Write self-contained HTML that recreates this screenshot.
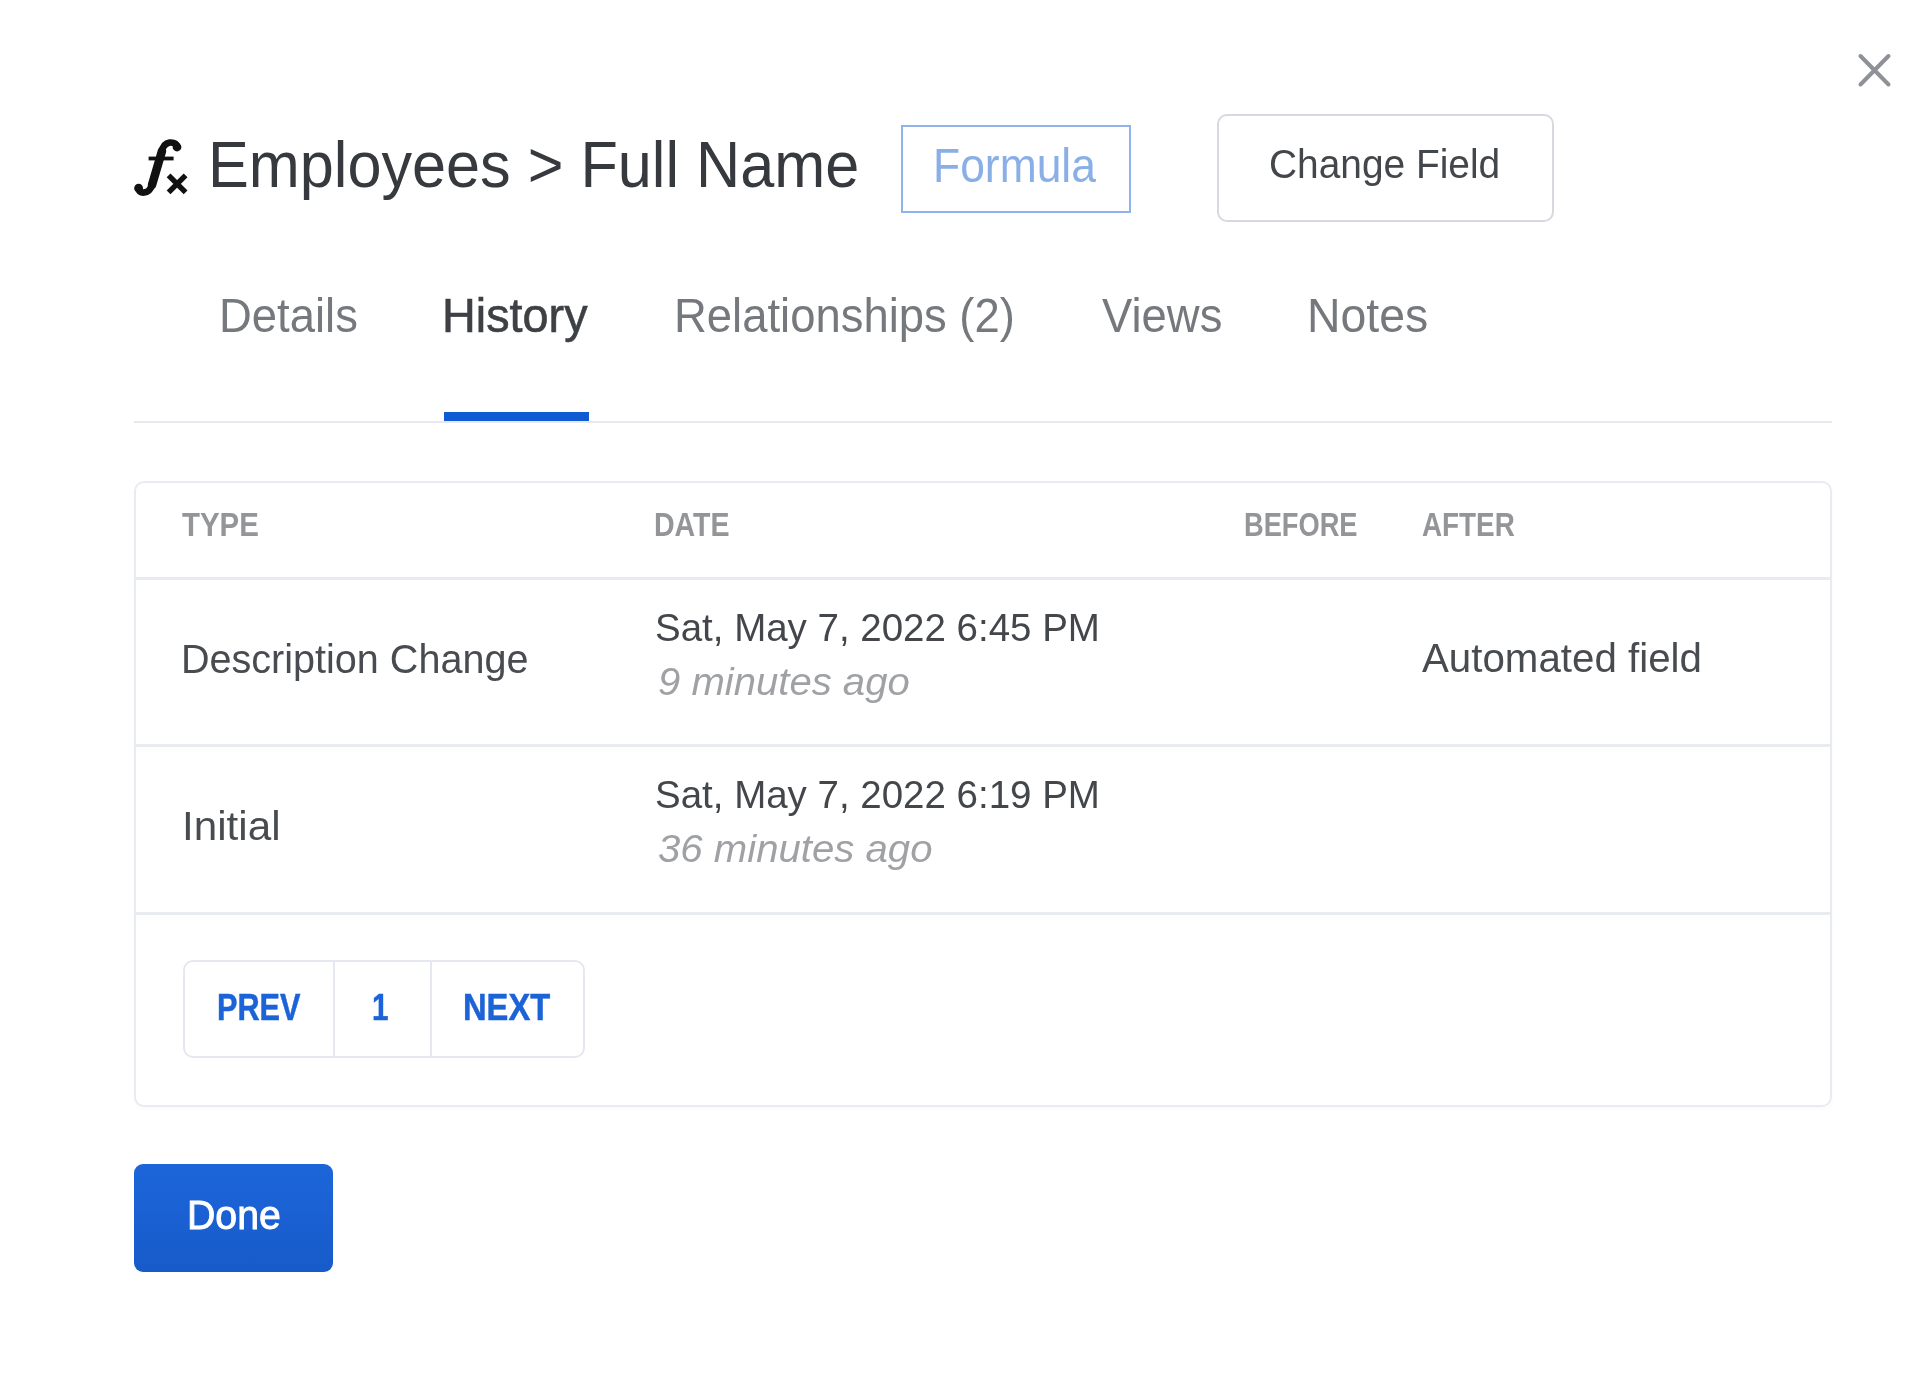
<!DOCTYPE html>
<html><head><meta charset="utf-8">
<style>
html,body{margin:0;padding:0;}
body{width:1920px;height:1377px;position:relative;overflow:hidden;background:#ffffff;font-family:"Liberation Sans",sans-serif;}
#wrap{position:absolute;left:0;top:0;width:1920px;height:1377px;filter:blur(0.7px);}
.t{position:absolute;white-space:nowrap;line-height:1;transform-origin:0 0;}
.b{position:absolute;box-sizing:border-box;}
</style></head><body><div id="wrap">
<!-- close -->
<svg class="b" style="left:1850px;top:46px" width="50" height="50" viewBox="1850 46 50 50"><path d="M1860.5 56 L1888.5 84.5 M1888.5 56 L1860.5 84.5" stroke="#8e9196" stroke-width="4" stroke-linecap="round" fill="none"/></svg>
<!-- fx icon -->
<svg class="b" style="left:120px;top:120px" width="80" height="90" viewBox="120 120 80 90">
<path d="M177.5 147 C176.5 143 173 142.3 169.5 142.6 C164.5 143.2 162.3 147.5 161.2 153 L152.5 183.5 C150.8 189.5 147.5 192.6 143.5 192.6 C140.5 192.6 138.8 190.8 138.5 188.5" stroke="#111" stroke-width="6.6" fill="none" stroke-linecap="round"/>
<path d="M162 151 L152 185" stroke="#111" stroke-width="8.5" stroke-linecap="round"/>
<circle cx="177" cy="147" r="4.4" fill="#111"/>
<circle cx="138.6" cy="188.2" r="4.4" fill="#111"/>
<path d="M148.6 158.5 L173.6 158.5" stroke="#111" stroke-width="3.8"/>
<path d="M168.6 175.3 L185.6 192.3 M185.6 175.3 L168.6 192.3" stroke="#111" stroke-width="5.4" stroke-linecap="butt"/>
</svg>
<!-- formula box -->
<div class="b" style="left:901px;top:125px;width:229.5px;height:88px;border:2.5px solid #90b3e9;"></div>
<!-- change field -->
<div class="b" style="left:1216.5px;top:114px;width:337px;height:108px;border:2px solid #d6d9df;border-radius:10px;"></div>
<!-- tabs line -->
<div class="b" style="left:134px;top:421px;width:1698px;height:2px;background:#e8e9ee;"></div>
<div class="b" style="left:443.5px;top:412px;width:145px;height:9px;background:#0f5bd2;"></div>
<!-- card -->
<div class="b" style="left:134px;top:480.5px;width:1698px;height:626.5px;border:2.5px solid #e8ebf0;border-radius:10px;box-shadow:0 2px 5px rgba(0,0,0,0.025);"></div>
<div class="b" style="left:136px;top:576.5px;width:1694px;height:3px;background:#e8ebf0;"></div>
<div class="b" style="left:136px;top:743.5px;width:1694px;height:3px;background:#e8ebf0;"></div>
<div class="b" style="left:136px;top:911.5px;width:1694px;height:3px;background:#e8ebf0;"></div>
<!-- pagination -->
<div class="b" style="left:183px;top:960px;width:402px;height:98px;border:2px solid #e5e8ee;border-radius:10px;"></div>
<div class="b" style="left:333px;top:961px;width:2px;height:96px;background:#e5e8ee;"></div>
<div class="b" style="left:429.5px;top:961px;width:2px;height:96px;background:#e5e8ee;"></div>
<!-- done -->
<div class="b" style="left:134px;top:1164.2px;width:198.7px;height:108.2px;background:linear-gradient(#1c66d9,#1a60d2 50%,#175bc9);border-radius:9px;"></div>
<div class="t" style="left:207.99px;top:132.26px;font-size:65px;color:#36393e;font-weight:normal;font-style:normal;transform:scaleX(0.9414);">Employees &gt; Full Name</div>
<div class="t" style="left:933.37px;top:140.91px;font-size:49px;color:#8aafe7;font-weight:normal;font-style:normal;transform:scaleX(0.9067);">Formula</div>
<div class="t" style="left:1269.09px;top:144.44px;font-size:40.7px;color:#43464a;font-weight:normal;font-style:normal;transform:scaleX(0.9550);">Change Field</div>
<div class="t" style="left:219.18px;top:291.40px;font-size:48.3px;color:#75787c;font-weight:normal;font-style:normal;transform:scaleX(0.9409);">Details</div>
<div class="t" style="left:442.16px;top:291.27px;font-size:48.7px;color:#3d4044;font-weight:normal;font-style:normal;transform:scaleX(0.9606);-webkit-text-stroke:0.6px #3d4044;">History</div>
<div class="t" style="left:674.47px;top:291.27px;font-size:48.7px;color:#75787c;font-weight:normal;font-style:normal;transform:scaleX(0.9331);">Relationships (2)</div>
<div class="t" style="left:1101.80px;top:291.27px;font-size:48.7px;color:#75787c;font-weight:normal;font-style:normal;transform:scaleX(0.9330);">Views</div>
<div class="t" style="left:1306.79px;top:291.27px;font-size:48.7px;color:#75787c;font-weight:normal;font-style:normal;transform:scaleX(0.9529);">Notes</div>
<div class="t" style="left:181.80px;top:509.25px;font-size:32.3px;color:#939598;font-weight:bold;font-style:normal;transform:scaleX(0.9116);">TYPE</div>
<div class="t" style="left:654.43px;top:509.25px;font-size:32.3px;color:#939598;font-weight:bold;font-style:normal;transform:scaleX(0.8834);">DATE</div>
<div class="t" style="left:1243.61px;top:509.25px;font-size:32.3px;color:#939598;font-weight:bold;font-style:normal;transform:scaleX(0.8437);">BEFORE</div>
<div class="t" style="left:1421.80px;top:509.25px;font-size:32.3px;color:#939598;font-weight:bold;font-style:normal;transform:scaleX(0.8619);">AFTER</div>
<div class="t" style="left:181.27px;top:638.91px;font-size:40.5px;color:#484b4f;font-weight:normal;font-style:normal;transform:scaleX(0.9767);">Description Change</div>
<div class="t" style="left:655.32px;top:607.92px;font-size:39.3px;color:#43464a;font-weight:normal;font-style:normal;transform:scaleX(0.9791);">Sat, May 7, 2022 6:45 PM</div>
<div class="t" style="left:657.77px;top:661.98px;font-size:39px;color:#9fa1a5;font-weight:normal;font-style:italic;transform:scaleX(1.0275);">9 minutes ago</div>
<div class="t" style="left:1421.80px;top:638.11px;font-size:40.5px;color:#484b4f;font-weight:normal;font-style:normal;transform:scaleX(0.9946);">Automated field</div>
<div class="t" style="left:181.57px;top:805.51px;font-size:40.5px;color:#484b4f;font-weight:normal;font-style:normal;transform:scaleX(1.0430);">Initial</div>
<div class="t" style="left:655.32px;top:775.02px;font-size:39.3px;color:#43464a;font-weight:normal;font-style:normal;transform:scaleX(0.9791);">Sat, May 7, 2022 6:19 PM</div>
<div class="t" style="left:657.50px;top:829.48px;font-size:39px;color:#9fa1a5;font-weight:normal;font-style:italic;transform:scaleX(1.0292);">36 minutes ago</div>
<div class="t" style="left:217.02px;top:989.70px;font-size:36.5px;color:#1b63d7;font-weight:bold;font-style:normal;transform:scaleX(0.8394);-webkit-text-stroke:0.5px #1b63d7;">PREV</div>
<div class="t" style="left:372.18px;top:989.70px;font-size:36.5px;color:#1b63d7;font-weight:bold;font-style:normal;transform:scaleX(0.8111);-webkit-text-stroke:0.5px #1b63d7;">1</div>
<div class="t" style="left:462.71px;top:989.70px;font-size:36.5px;color:#1b63d7;font-weight:bold;font-style:normal;transform:scaleX(0.8953);-webkit-text-stroke:0.5px #1b63d7;">NEXT</div>
<div class="t" style="left:186.96px;top:1194.55px;font-size:41.4px;color:#ffffff;font-weight:normal;font-style:normal;transform:scaleX(0.9481);-webkit-text-stroke:0.9px #ffffff;">Done</div>
</div></body></html>
